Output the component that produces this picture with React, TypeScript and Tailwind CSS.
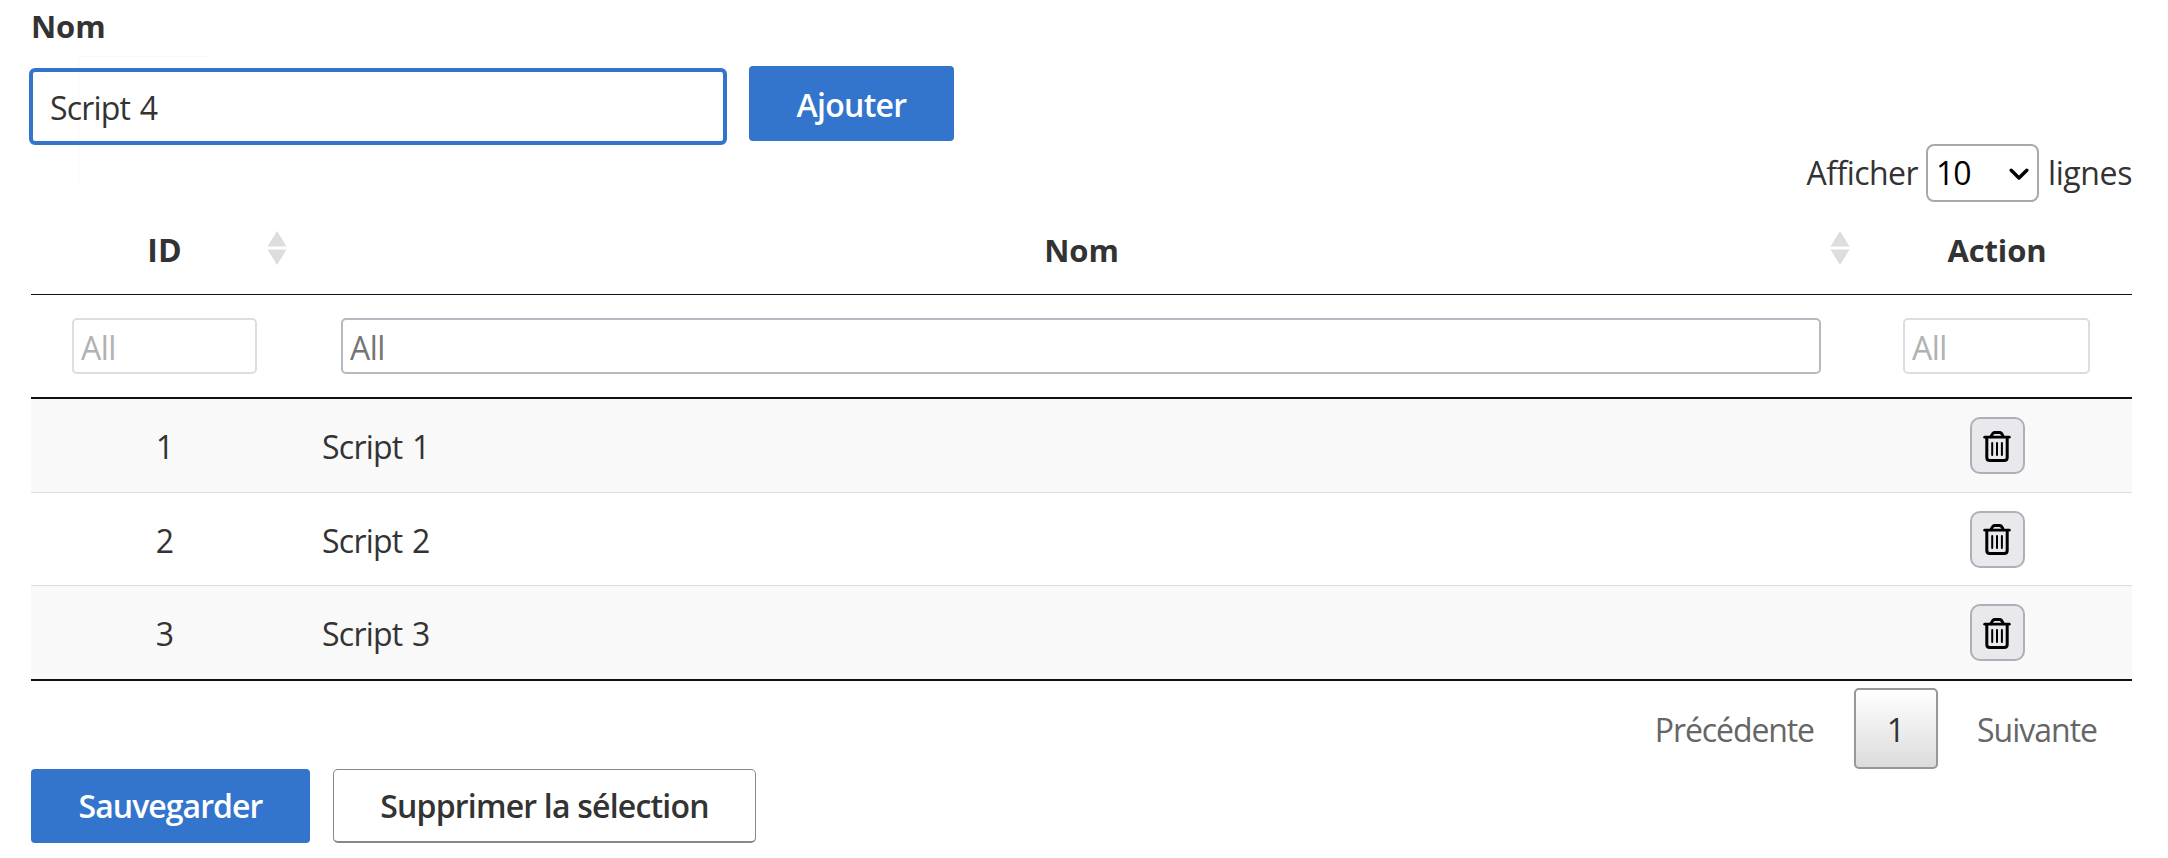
import type { ReactNode } from "react";

function TrashIcon() {
  return (
    <svg width="28" height="32" viewBox="0 0 28 32" fill="none" stroke="#000" strokeLinecap="round" strokeLinejoin="round">
      <path d="M1.7 7.2H26.3" strokeWidth="2.8" />
      <path d="M8 6.6C9 4.2 10 2.4 11.6 2.4H16.6C18.4 2.4 19.4 4.2 20.2 6.6" strokeWidth="3" />
      <path d="M3.8 7.6V27.4Q3.8 30.4 7 30.4H21Q24.2 30.4 24.2 27.4V7.6" strokeWidth="3" />
      <path d="M9.2 13V25M14 13V25M18.9 13V25" strokeWidth="2" />
    </svg>
  );
}

function SortIcon() {
  return (
    <svg width="20" height="34" viewBox="0 0 20 34" fill="#dddddd">
      <path d="M10 0L19.5 15.5H0.5Z" />
      <path d="M10 34L19.5 18.5H0.5Z" />
    </svg>
  );
}

function Filter({ dim = false }: { dim?: boolean }) {
  return (
    <input
      placeholder="All"
      className={
        dim
          ? "block h-14 w-full rounded-[5px] border-2 border-[#dcdce2] bg-white pl-[7px] pt-[2px] tracking-[-0.5px] text-[#333] outline-none placeholder:text-[#b2b2b2]"
          : "block h-14 w-full rounded-[5px] border-2 border-[#b8b8c0] bg-white pl-[7px] pt-[2px] tracking-[-0.5px] text-[#333] outline-none placeholder:text-[#757575]"
      }
    />
  );
}

const grid = "grid grid-cols-[277px_1556px_268px]";

function Row({ id, striped, children }: { id: number; striped: boolean; children: ReactNode }) {
  return (
    <div className={`${grid} items-center ${striped ? "bg-[#f9f9f9]" : "bg-white"}`}>
      <div className="pr-[9px] pt-[3px] text-center">{id}</div>
      <div className="pl-[14px] pt-[3px] tracking-[-0.75px] [word-spacing:2px]">{children}</div>
      <div className="flex justify-center pr-[2px]">
        <button className="flex h-[57px] w-[55px] items-center justify-center rounded-[10px] border-2 border-[#afafb7] bg-[#e9e9ed]">
          <TrashIcon />
        </button>
      </div>
    </div>
  );
}

export default function App() {
  return (
    <div className="relative isolate h-[858px] w-[2168px] overflow-hidden bg-white pl-[31px] font-['Open_Sans','Noto_Sans',sans-serif] text-[32px] leading-[44px] text-[#333]">
      <div className="absolute left-[78px] top-[56px] -z-10 h-[130px] w-[130px] bg-[linear-gradient(#f8f8f8,#f8f8f8),linear-gradient(#f8f8f8,#f8f8f8)] bg-[length:1px_100%,100%_1px] bg-no-repeat" />
      <label className="block h-[66px] pt-[4px] text-[31px] font-bold tracking-[-0.1px]">Nom</label>
      <div className="-ml-[2px] flex h-[78px] items-start">
        <input
          defaultValue="Script 4"
          className="mt-[2px] h-[77px] w-[698px] rounded-[6px] border-4 border-[#3375cd] bg-transparent pl-[17px] pt-[2px] tracking-[-0.8px] outline-none [word-spacing:2px]"
        />
        <button className="ml-[22px] h-[75px] w-[205px] rounded-[4px] bg-[#3375cd] pt-[2px] font-semibold tracking-[-0.7px] text-white">Ajouter</button>
      </div>
      <div className="flex h-[58px] w-[2101px] items-center justify-end">
        <span className="tracking-[-0.55px]">Afficher</span>
        <div className="ml-[8px] mr-[9px] flex h-[58px] w-[113px] items-center justify-between rounded-[8px] border-2 border-[#a9a9a9] bg-white pl-[8px] pr-[8px] text-black">
          <span className="tracking-[-1px]">10</span>
          <svg className="mt-[2px]" width="20" height="14" viewBox="0 0 20 14" fill="none" stroke="#000" strokeWidth="3.4" strokeLinecap="round" strokeLinejoin="round">
            <path d="M2.2 3.2L10 11L17.8 3.2" />
          </svg>
        </div>
        <span className="w-[84px] tracking-[-0.4px]">lignes</span>
      </div>

      <div className="w-[2101px]">
        <div className={`${grid} h-[93px] items-center border-b border-[#111] pt-[4px] font-bold`}>
          <div className="flex items-center">
            <span className="ml-[19px] w-[229px] text-center">ID</span>
            <span className="-mt-[4px] ml-[-12px]"><SortIcon /></span>
          </div>
          <div className="flex items-center">
            <span className="ml-[36px] w-[1475px] text-center text-[31px] tracking-[-0.1px]">Nom</span>
            <span className="-mt-[4px] ml-[11px]"><SortIcon /></span>
          </div>
          <div className="pr-[2px] text-center text-[31px] tracking-[-0.1px]">Action</div>
        </div>
        <div className={`${grid} h-[104px] items-center border-b-2 border-[#111]`}>
          <div className="pl-[41px] pr-[51px]"><Filter dim /></div>
          <div className="pl-[33px] pr-[43px]"><Filter /></div>
          <div className="pl-[39px] pr-[42px]"><Filter dim /></div>
        </div>
        <div className="grid h-[282px] grid-rows-[93px_93px_94px] border-b-2 border-[#111]">
          <Row id={1} striped>Script 1</Row>
          <div className="grid border-t border-[#ddd]"><Row id={2} striped={false}>Script 2</Row></div>
          <div className="grid border-t border-[#ddd]"><Row id={3} striped>Script 3</Row></div>
        </div>
      </div>

      <div className="flex h-[88px] w-[2101px] items-start justify-end pt-[7px] text-[#666]">
        <span className="mt-[20px] tracking-[-1.1px]">Précédente</span>
        <button className="ml-[40px] h-[81px] w-[84px] rounded-[5px] border-2 border-[#979797] bg-linear-to-b from-white to-[#dcdcdc] pt-[2px] text-[#333]">1</button>
        <span className="ml-[39px] mr-[35px] mt-[20px] tracking-[-1px]">Suivante</span>
      </div>
      <div className="flex gap-[23px] font-semibold">
        <button className="h-[74px] w-[279px] rounded-[4px] bg-[#3375cd] tracking-[-0.95px] text-white">Sauvegarder</button>
        <button className="h-[74px] w-[423px] rounded-[5px] border border-b-2 border-[#888] bg-white tracking-[-0.8px]">Supprimer la sélection</button>
      </div>
    </div>
  );
}
